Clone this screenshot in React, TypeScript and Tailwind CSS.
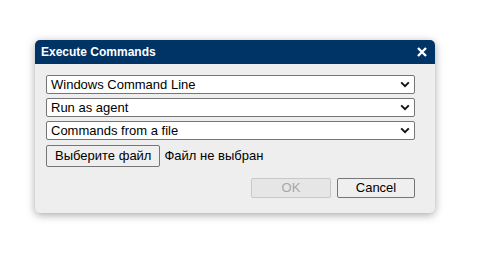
import React from "react";

const Chevron = () => (
  <svg width="10" height="7" viewBox="0 0 10 7" className="shrink-0">
    <path d="M1.2 1.4 L5 5.2 L8.8 1.4" fill="none" stroke="#111" strokeWidth="1.9" />
  </svg>
);

const FakeSelect = ({ value }: { value: string }) => (
  <div className="flex items-center justify-between w-[369px] h-[19px] border border-[#767676] rounded-[2px] bg-white pl-[4px] pr-[4px]">
    <span className="leading-none">{value}</span>
    <Chevron />
  </div>
);

export default function App() {
  return (
    <div className="w-[502px] h-[280px] bg-white pl-[35px] pt-[40px] font-['Liberation_Sans',Arial,sans-serif] text-[13px] text-black">
      <div className="w-[400px] rounded-[5px] bg-[#eeeeee] shadow-[0_2px_9px_rgba(0,0,0,0.35)] overflow-hidden">
        <div className="flex items-center justify-between h-[24px] bg-[#003366] pl-[6px] pr-[8px] text-white text-[12px] font-bold">
          <span>Execute Commands</span>
          <svg width="10" height="10" viewBox="0 0 10 10">
            <path d="M1 1 L9 9 M9 1 L1 9" stroke="#fff" strokeWidth="2.4" />
          </svg>
        </div>
        <div className="pl-[11px] pr-[20px] pt-[11px] pb-[15px]">
          <div className="flex flex-col gap-[4px]">
            <FakeSelect value="Windows Command Line" />
            <FakeSelect value="Run as agent" />
            <FakeSelect value="Commands from a file" />
          </div>
          <div className="flex items-center mt-[5px]">
            <div className="flex items-center h-[22px] px-[8px] border border-[#767676] rounded-[2px] bg-[#efefef]">
              Выберите файл
            </div>
            <span className="ml-[4px]">Файл не выбран</span>
          </div>
          <div className="flex justify-end gap-[6px] mt-[11px]">
            <div className="flex items-center justify-center w-[80px] h-[20px] border border-[#c8c8c8] rounded-[2px] bg-[#e6e6e6] text-[#a6a6a6]">
              OK
            </div>
            <div className="flex items-center justify-center w-[78px] h-[20px] border border-[#767676] rounded-[2px] bg-[#efefef]">
              Cancel
            </div>
          </div>
        </div>
      </div>
    </div>
  );
}
